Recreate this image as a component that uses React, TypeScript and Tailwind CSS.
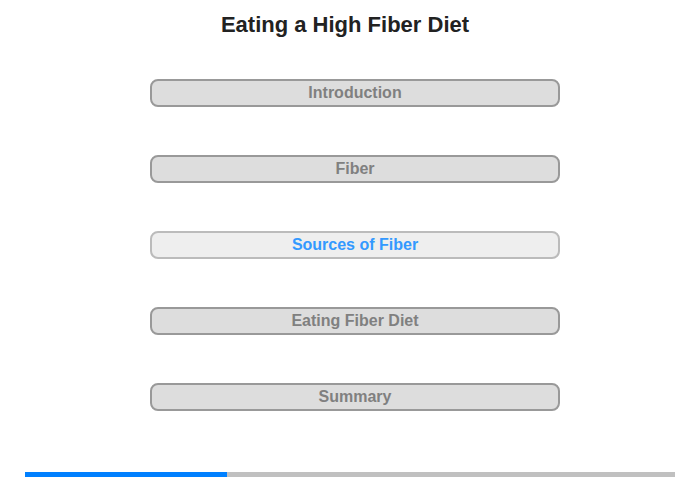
import React from 'react'

const sections = ['Introduction', 'Fiber', 'Sources of Fiber', 'Eating Fiber Diet', 'Summary']
const current = 'Sources of Fiber'

export default function App() {
  return (
    <div className="relative h-[480px] w-[700px] bg-white font-['Liberation_Sans',Arial,sans-serif]">
      <h1 className="pr-[10px] pt-[12px] text-center text-[22px] font-bold leading-[26px] text-[#222222]">
        Eating a High Fiber Diet
      </h1>
      <nav className="ml-[150px] mt-[41px] flex w-[410px] flex-col gap-[48px]">
        {sections.map((s) => {
          const active = s === current
          return (
            <button
              key={s}
              type="button"
              className={`h-[28px] w-full rounded-[8px] border-2 text-[16px] font-bold leading-[24px] ${
                active ? 'border-[#bbbbbb] bg-[#eeeeee] text-[#3399ff]' : 'border-[#999999] bg-[#dddddd] text-[#808080]'
              }`}
            >
              {s}
            </button>
          )
        })}
      </nav>
      <div className="absolute left-[25px] top-[472px] flex h-[5px] w-[650px] bg-[#c0c0c0]">
        <div className="h-full w-[202px] bg-[#0080ff]" />
      </div>
    </div>
  )
}
